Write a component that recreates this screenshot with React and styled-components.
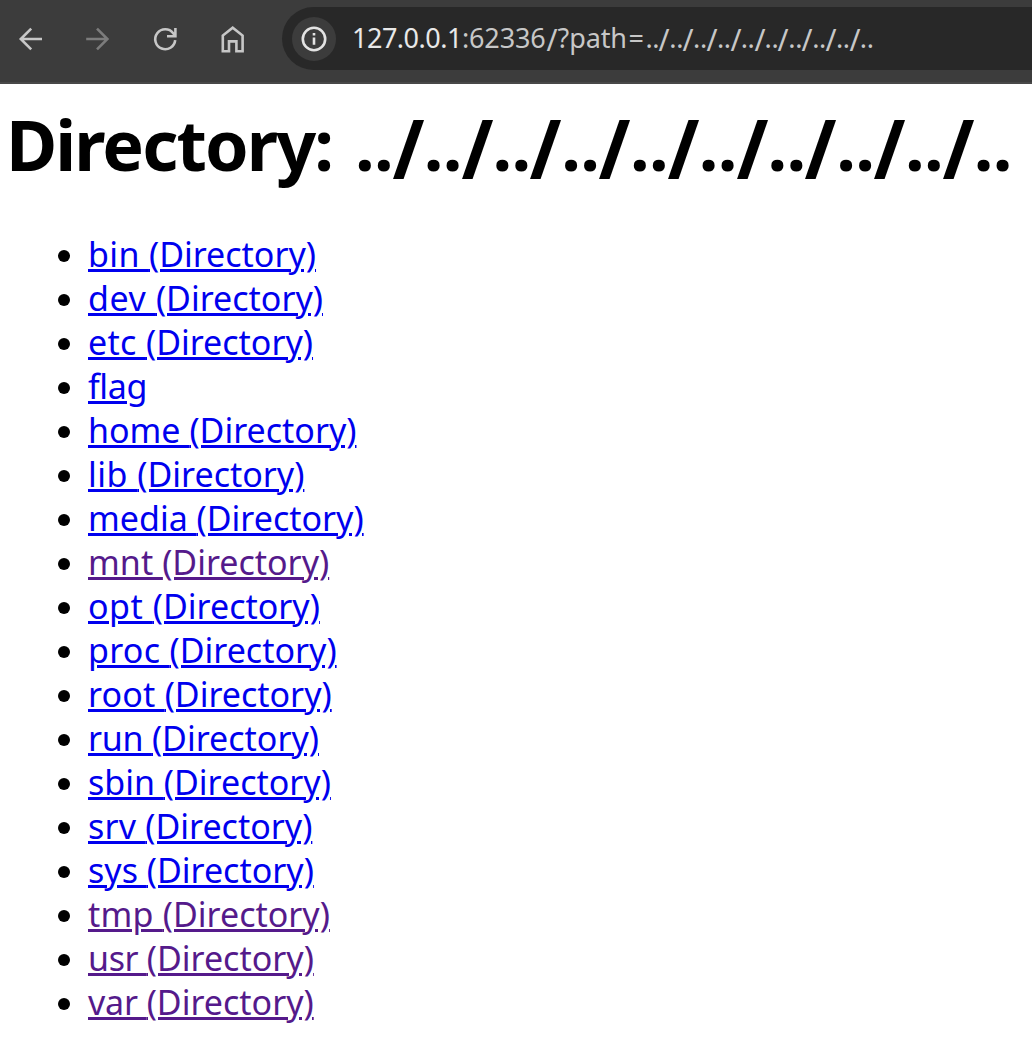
import React from "react";
import styled, { createGlobalStyle } from "styled-components";

const GlobalStyle = createGlobalStyle`
  body {
    margin: 0;
    background: #fff;
    color: #000;
    font-family: "Noto Sans", "Open Sans", sans-serif;
  }
`;

const Page = styled.div`
  width: 100%;
  min-height: 1060px;
  overflow: hidden;
`;

const Toolbar = styled.header`
  box-sizing: border-box;
  display: flex;
  align-items: flex-start;
  height: 84px;
  padding: 7px 0 0 17px;
  background: #3c3c3c;
  border-bottom: 2px solid #484848;
`;

const NavButtons = styled.nav`
  display: flex;
  gap: 39px;
  padding-top: 18px;
  margin-right: 36px;
`;

const Icon = styled.svg`
  display: block;
  width: 28px;
  height: 28px;
  fill: none;
  stroke: ${(p) => (p.$dim ? "#7c7c7c" : "#c7c7c7")};
  stroke-width: 2.6;
`;

const AddressBar = styled.div`
  flex: 1;
  display: flex;
  align-items: center;
  height: 63px;
  box-sizing: border-box;
  padding-left: 10px;
  border-radius: 32px 0 0 32px;
  background: #282828;
`;

const InfoBadge = styled.div`
  display: flex;
  align-items: center;
  justify-content: center;
  width: 44px;
  height: 44px;
  margin-right: 16px;
  border-radius: 50%;
  background: #3c3c3c;
`;

const InfoIcon = styled(Icon)`
  stroke: #e3e3e3;
`;

const Url = styled.div`
  padding-bottom: 2px;
  font-size: 27px;
  line-height: 40px;
  color: #c7c7c7;
  white-space: nowrap;
`;

const Run = styled.span`
  letter-spacing: ${(p) => p.$track || 0}px;
`;

const Host = styled(Run)`
  color: #e8e8e8;
`;

const Glyph = styled.span`
  display: inline-flex;
  justify-content: center;
  width: ${(p) => p.$w}px;
`;

const Slash = styled(Glyph)`
  transform: scale(${(p) => p.$sx || 1.1}, 1.16);
  transform-origin: 50% ${(p) => p.$top}px;
`;

const Content = styled.main`
  padding: 12px 8px 0;
`;

const Title = styled.h1`
  margin: 0 0 42px -2px;
  font-size: 70px;
  font-weight: 700;
  line-height: 96px;
  white-space: nowrap;
`;

const Label = styled.span`
  display: inline-block;
  width: 349px;
  letter-spacing: -1.9px;
`;

const List = styled.ul`
  margin: 0;
  padding: 0 0 0 50px;
  list-style: none;
`;

const Item = styled.li`
  display: flex;
  align-items: center;
  gap: 18px;
  height: 44px;

  &::before {
    content: "";
    width: 12px;
    height: 12px;
    border-radius: 50%;
    background: #000;
  }
`;

const EntryLink = styled.a`
  align-self: flex-start;
  font-size: 34px;
  line-height: 40px;
  white-space: pre;
  color: ${(p) => (p.$visited ? "#551a8b" : "#0000ee")};
  text-decoration: underline;
  text-decoration-thickness: 3px;
  text-underline-offset: 2px;
`;

const ENTRIES = [
  { name: "bin", track: 0.35 },
  { name: "dev", track: 0.6 },
  { name: "etc", track: 0.33 },
  { name: "flag", track: -0.35, file: true },
  { name: "home", track: 0 },
  { name: "lib", track: 0.5 },
  { name: "media", track: 0 },
  { name: "mnt", track: 0.05, visited: true },
  { name: "opt", track: 0.55 },
  { name: "proc", track: 0.3 },
  { name: "root", track: 0.2 },
  { name: "run", track: -0.25 },
  { name: "sbin", track: 0 },
  { name: "srv", track: 0.2 },
  { name: "sys", track: 0 },
  { name: "tmp", track: 0.25, visited: true },
  { name: "usr", track: -0.36, visited: true },
  { name: "var", track: -0.15, visited: true },
];

const LEVELS = Array.from({ length: 9 }, (_, i) => i);

export default function App() {
  return (
    <Page>
      <GlobalStyle />
      <Toolbar>
        <NavButtons>
          <Icon viewBox="0 0 28 28">
            <path d="M25 14H4M14.2 3.6L3.8 14l10.4 10.4" />
          </Icon>
          <Icon viewBox="0 0 28 28" $dim>
            <path d="M2.2 14h21M13 3.6L23.4 14 13 24.4" />
          </Icon>
          <Icon viewBox="0 0 28 28">
            <path d="M24.2 15.2A10 10 0 1 1 22.2 8.2L24.2 10.7M24.4 3v8.2H16" />
          </Icon>
          <Icon viewBox="0 0 28 28">
            <path d="M4.8 26.3V10.6L14.7 2.7l9.9 7.9v15.7h-6.2V16.4h-7.4v9.9z" />
          </Icon>
        </NavButtons>
        <AddressBar>
          <InfoBadge>
            <InfoIcon viewBox="0 0 28 28">
              <circle cx="14" cy="14" r="11.2" />
              <path d="M14 12.6v7.2M14 8v2.6" />
            </InfoIcon>
          </InfoBadge>
          <Url>
            <Host $track={-0.49}>127.0.0.1</Host>
            <Run $track={-0.15}>:62336</Run>
            <Slash $w={12} $top={11}>/</Slash>
            <Run $track={-0.1}>?path</Run>
            <Glyph $w={18.5}>=</Glyph>
            {LEVELS.map((i) => (
              <React.Fragment key={i}>
                <Run $track={-0.3}>..</Run>
                <Slash $w={9.95} $top={11}>/</Slash>
              </React.Fragment>
            ))}
            <Run $track={-0.3}>..</Run>
          </Url>
        </AddressBar>
      </Toolbar>
      <Content>
        <Title>
          <Label>Directory:</Label>
          {LEVELS.map((i) => (
            <React.Fragment key={i}>
              <Run $track={-0.7}>..</Run>
              <Slash $w={30.8} $top={26} $sx={1.1}>/</Slash>
            </React.Fragment>
          ))}
          <Run $track={-0.7}>..</Run>
        </Title>
        <List>
          {ENTRIES.map((e) => (
            <Item key={e.name}>
              <EntryLink href={"#" + e.name} $visited={e.visited}>
                <Run $track={e.track}>{e.file ? e.name : e.name + " "}</Run>
                {!e.file && "(Directory)"}
              </EntryLink>
            </Item>
          ))}
        </List>
      </Content>
    </Page>
  );
}
